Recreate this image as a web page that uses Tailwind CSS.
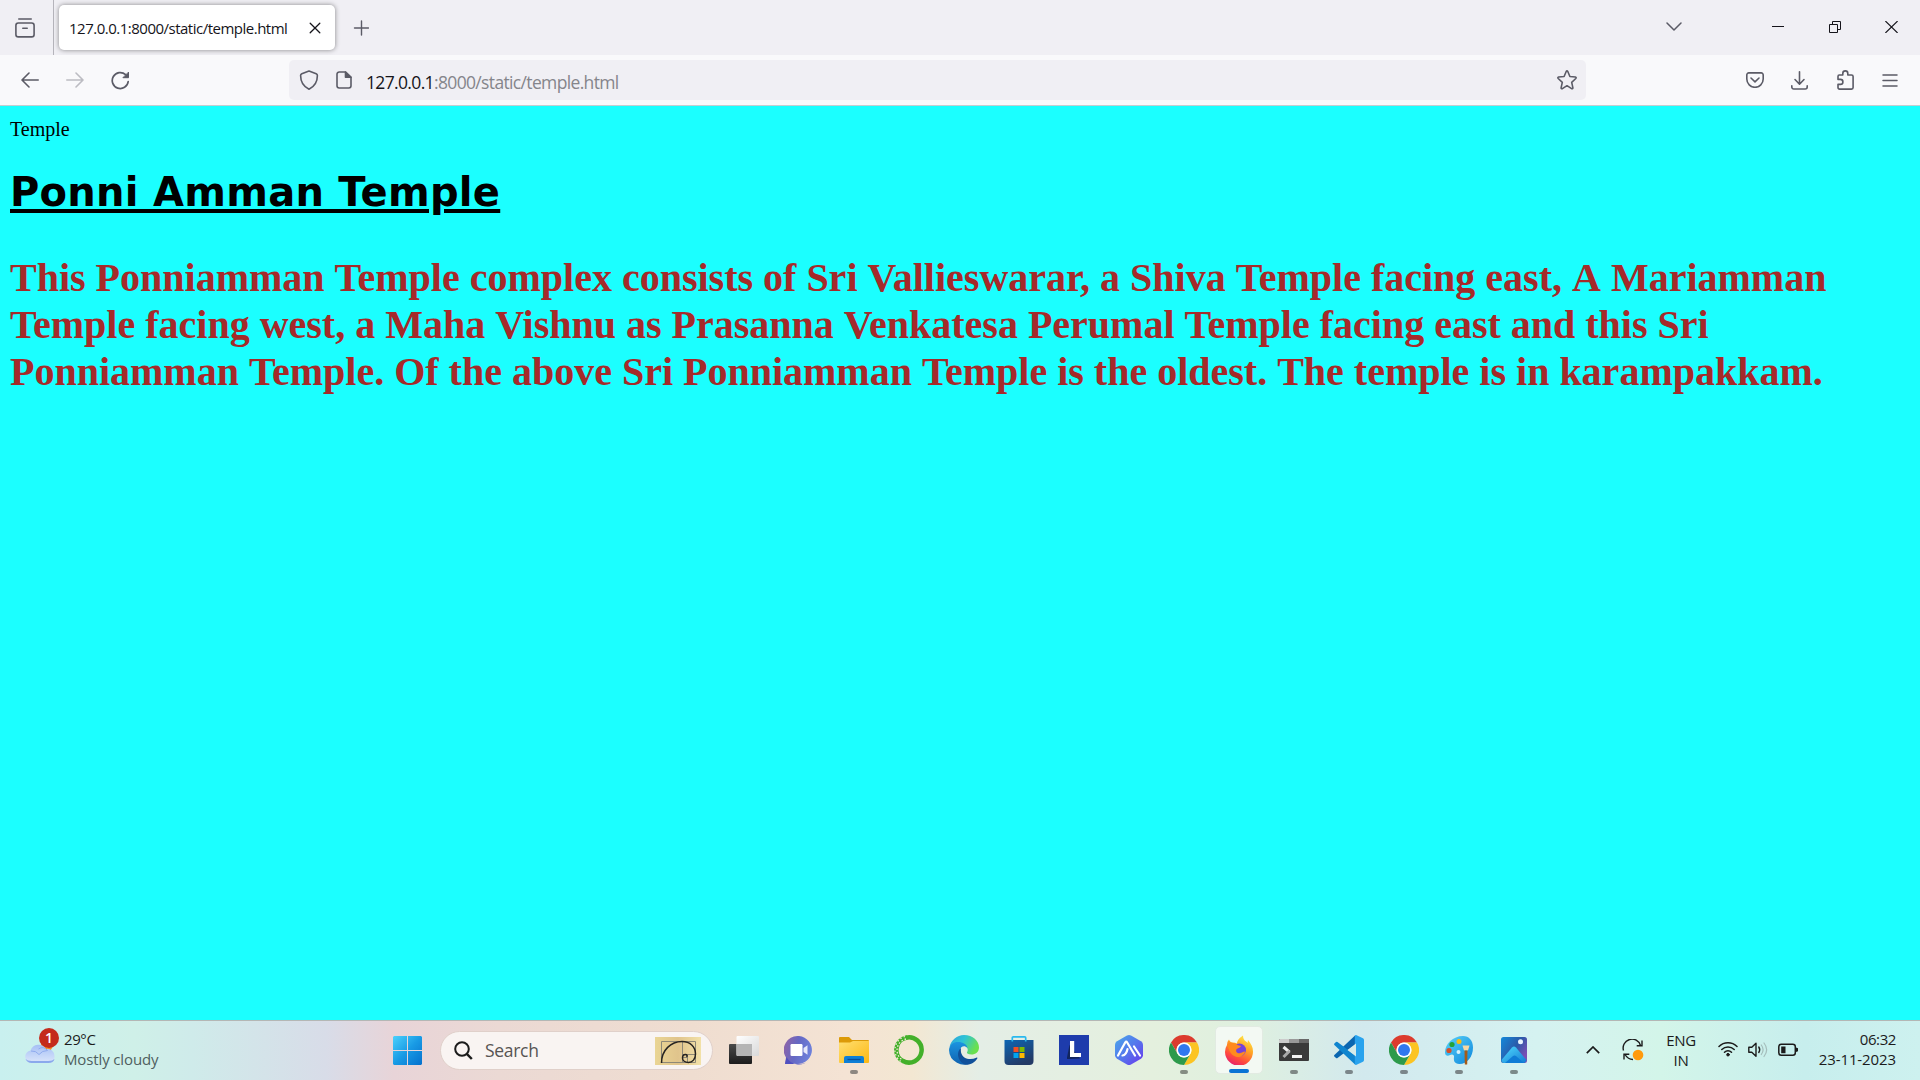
<!DOCTYPE html>
<html lang="en">
<head>
<meta charset="utf-8">
<title>Temple</title>
<script src="https://cdn.jsdelivr.net/npm/@tailwindcss/browser@4"></script>
</head>
<body class="flex h-screen w-screen flex-col overflow-hidden font-['Open_Sans',sans-serif] text-[#15141a]">

<!-- Tab strip -->
<header class="flex h-[55px] shrink-0 items-start bg-[#f0eff4]">
  <div class="flex h-[55px] w-[54px] items-center justify-center border-r border-[#b5b4bb] pr-1">
    <svg class="h-5 w-5" viewBox="0 0 20 20" fill="none" stroke="#5b5b66" stroke-width="1.6" stroke-linecap="round"><path d="M3.800 1h12.400"/><rect x=".9" y="5" width="18.200" height="13.900" rx="2.400"/><path d="M7.800 10.200h4.400"/></svg>
  </div>
  <div class="mt-[5px] ml-[5px] flex h-[45px] w-[276px] items-center rounded-[5px] bg-white pl-[10px] shadow-[0_0_5px_rgba(0,0,0,0.45)]">
    <span class="w-[240px] pt-[2px] text-[15px] tracking-[-0.5px] whitespace-nowrap">127.0.0.1:8000/static/temple.html</span>
    <svg class="h-3 w-3 shrink-0" viewBox="0 0 12 12" stroke="#15141a" stroke-width="1.3" stroke-linecap="round"><path d="M1.200 1.200l9.600 9.600M10.800 1.200L1.200 10.800"/></svg>
  </div>
  <svg class="mt-5 ml-[18px] h-4 w-4" viewBox="0 0 16 16" stroke="#5b5b66" stroke-width="1.4" stroke-linecap="round"><path d="M8.500 1v14M1.500 8h14"/></svg>
  <svg class="mt-[22px] ml-auto h-[10px] w-4" viewBox="0 0 16 10" fill="none" stroke="#5b5b66" stroke-width="1.5" stroke-linecap="round" stroke-linejoin="round"><path d="M1 1l7 7 7-7"/></svg>
  <svg class="mt-5 ml-[90px] h-[14px] w-3" viewBox="0 0 12 14"><path d="M0 6h12v1H0z" fill="#15141a"/></svg>
  <svg class="mt-[21px] ml-[45px] h-3 w-3" viewBox="0 0 12 12" fill="none" stroke="#15141a"><path d="M.5 3.500h8v8h-8zM3.500 3.500v-3h8v8h-3"/></svg>
  <svg class="mt-[21px] mr-[22px] ml-11 h-3 w-[13px]" viewBox="0 0 13 12" stroke="#15141a" stroke-width="1.1"><path d="M.4 0l12.200 12M12.600 0L.4 12"/></svg>
</header>

<!-- Navigation bar -->
<nav class="flex h-[51px] shrink-0 items-center border-b border-[#c4cdd0] bg-[#f9f9fb] pl-[21px]">
  <svg class="h-4 w-[18px]" viewBox="0 0 18 16" fill="none" stroke="#5b5b66" stroke-width="1.6" stroke-linecap="round" stroke-linejoin="round"><path d="M17.200 8H1.200M8 1L1 8l7 7"/></svg>
  <svg class="ml-[27px] h-4 w-[18px]" viewBox="0 0 18 16" fill="none" stroke="#bcbcc2" stroke-width="1.6" stroke-linecap="round" stroke-linejoin="round"><path d="M.8 8h16M10 1l7 7-7 7"/></svg>
  <svg class="ml-[27px] h-[19px] w-[19px]" viewBox="0 0 19 19" fill="none" stroke="#5b5b66" stroke-width="1.7" stroke-linecap="round"><path d="M17.200 10.500A8 8 0 1 1 14.600 3.600"/><path d="M17.500 1.500v5.200h-5.200z" fill="#5b5b66" stroke-width="1" stroke-linejoin="round"/></svg>
  <div class="ml-[159px] flex h-10 w-[1297px] items-center rounded-[5px] bg-[#f0eff4] pr-[9px] pl-[10px]">
    <svg class="h-5 w-5" viewBox="0 0 20 20" fill="none" stroke="#5b5b66" stroke-width="1.6" stroke-linejoin="round"><path d="M10 1l7.200 2.700q1.200.5 1.200 1.800c0 6-2.400 10.800-8.400 13.700C4 16.300 1.600 11.500 1.600 5.500q0-1.300 1.200-1.800z"/></svg>
    <svg class="ml-[17px] h-[18px] w-4" viewBox="0 0 16 18" fill="none" stroke="#5b5b66" stroke-width="1.6" stroke-linejoin="round"><path d="M9.500 1H3.200A2.200 2.200 0 0 0 1 3.200v11.600A2.200 2.200 0 0 0 3.200 17h9.600a2.200 2.200 0 0 0 2.200-2.200V6.300z"/><path d="M9.500 1v5.300H15z" fill="#5b5b66"/></svg>
    <span class="ml-[14px] pt-[4px] text-[17.500px] tracking-[-0.65px] whitespace-nowrap text-[#85858b]"><span class="text-[#15141a]">127.0.0.1</span>:8000/static/temple.html</span>
    <svg class="ml-auto h-5 w-5" viewBox="0 0 20 20" fill="none" stroke="#5b5b66" stroke-width="1.6" stroke-linejoin="round"><path d="M9.200 1.500q.8-1.200 1.600 0l2.100 5 5.500.5q1.200.4.4 1.500l-4.100 3.800 1.200 5.500q0 1.300-1.300.9L10 15.700l-4.600 3q-1.300.4-1.300-.9l1.200-5.500-4.100-3.800q-.8-1.100.4-1.500l5.500-.5z"/></svg>
  </div>
  <svg class="ml-40 h-4 w-[18px]" viewBox="0 0 18 16" fill="none" stroke="#5b5b66" stroke-width="1.6" stroke-linecap="round" stroke-linejoin="round"><path d="M2.800.9h12.400a2 2 0 0 1 2 2v4.200a8.200 8.200 0 0 1-16.400 0V2.900a2 2 0 0 1 2-2z"/><path d="M5 6l4 3.800L13 6"/></svg>
  <svg class="ml-[27px] h-[19px] w-[17px]" viewBox="0 0 17 19" fill="none" stroke="#5b5b66" stroke-width="1.6" stroke-linecap="round" stroke-linejoin="round"><path d="M8.500.8v12M4 8.500l4.500 4.700L13 8.500M.8 14.800v1.200a2 2 0 0 0 2 2h11.400a2 2 0 0 0 2-2v-1.200"/></svg>
  <svg class="ml-[29px] h-5 w-[17px]" viewBox="0 0 17 20" fill="none" stroke="#5b5b66" stroke-width="1.6" stroke-linejoin="round"><path d="M2.200 5h3.600V3.400a2.500 2.500 0 0 1 5 0V5h3.700q1.600 0 1.600 1.600v11q0 1.500-1.600 1.500H2.600q-1.600 0-1.600-1.500v-3.200h2.400a2.500 2.500 0 0 0 0-5H1V6.500Q1 5 2.200 5z"/></svg>
  <svg class="ml-7 h-[13px] w-4" viewBox="0 0 16 13" stroke="#5b5b66" stroke-width="1.5" stroke-linecap="round"><path d="M1 1h14M1 6.500h14M1 12h14"/></svg>
</nav>

<!-- Page -->
<main class="h-[914px] shrink-0 bg-[#1bffff] px-[10px] pt-3 font-['Liberation_Serif',serif]">
  <p class="text-[20px] leading-[23px] text-black">Temple</p>
  <h1 class="mt-[27px] font-['DejaVu_Sans',sans-serif] text-[40px] leading-[49px] font-bold tracking-[0.27px] whitespace-nowrap text-black underline decoration-[4px] underline-offset-[3px]">Ponni Amman Temple</h1>
  <h1 class="mt-[37px] text-[40px] leading-[47px] font-bold whitespace-nowrap text-[#a52a2a]">This Ponniamman <span class="inline-block">Temple</span> complex consists of Sri <span class="inline-block">Vallieswarar,</span> a Shiva <span class="inline-block">Temple</span> facing east, <span class="inline-block">A</span> Mariamman<br>Temple facing west, a Maha <span class="inline-block">Vishnu</span> as Prasanna <span class="inline-block">Venkatesa</span> Perumal <span class="inline-block">Temple</span> facing east and this Sri<br>Ponniamman <span class="inline-block">Temple.</span> Of the above Sri Ponniamman <span class="inline-block">Temple</span> is the oldest. <span class="inline-block">The</span> temple is in karampakkam.</h1>
</main>

<!-- Taskbar -->
<footer class="flex h-[60px] shrink-0 items-start border-t border-[#b4b7b5] bg-[linear-gradient(90deg,#c9f0ef_0%,#cff0e8_7%,#cfebea_10%,#d8dce8_17%,#e8d4d8_20.500%,#ebd9d4_26%,#efddd0_36%,#f4e3d4_44%,#f3e7d2_47.500%,#e4eee6_51%,#e4f0de_60%,#dff0df_65%,#d2e9ee_71%,#d5f2f1_80%,#d3f5e9_86.500%,#c7eeed_94%,#cdf1ef_100%)]">
  <div class="flex w-[393px] pl-6">
    <div class="relative mt-[7px] h-9 w-[34px]">
      <svg class="h-9 w-[34px]" viewBox="0 0 34 36">
        <defs><linearGradient id="cl" x2="0" y2="1"><stop stop-color="#a5bff5"/><stop offset="1" stop-color="#dbe6fb"/></linearGradient></defs>
        <circle cx="23" cy="17" r="6" fill="#f7871e"/>
        <path d="M7 35a6.300 6.300 0 0 1-.5-12.500A8.500 8.500 0 0 1 22 21a7 7 0 0 1 8.500 7A6 6 0 0 1 25.500 35z" fill="url(#cl)"/>
        <path d="M1.500 31q2 4 6 4h17q5 0 6-4-2 2-6 2h-17q-4 0-6-2z" fill="#8ba9ec"/>
        <path d="M7 23q5-.5 8 3.500 3-4 8.500-4-4-5-9-1.500" fill="none" stroke="#8fabee" stroke-width="1"/>
      </svg>
      <span class="absolute top-0 left-[15px] flex h-5 w-5 items-center justify-center rounded-full bg-[#c42b1c] text-[14px] leading-none font-semibold text-white">1</span>
    </div>
    <div class="mt-2 ml-[6px] text-[15px] leading-5 whitespace-nowrap">
      <p class="tracking-[-0.4px] text-[#1b1b1b]">29°C</p>
      <p class="tracking-[-0.13px] text-[#4f5f60]">Mostly cloudy</p>
    </div>
  </div>

  <svg class="mt-[15px] h-[29px] w-[29px]" viewBox="0 0 29 29"><defs><linearGradient id="win" gradientUnits="userSpaceOnUse" x1="0" y1="0" x2="29" y2="29"><stop stop-color="#4cd1fc"/><stop offset=".5" stop-color="#199be5"/><stop offset="1" stop-color="#0570cd"/></linearGradient></defs><path d="M1 0h13v14H0V1zM15 0h13l1 1v13H15zM0 15h14v14H1l-1-1zM15 15h14v13l-1 1H15z" fill="url(#win)"/></svg>

  <div class="mt-[10px] ml-[18px] flex h-[39px] w-[273px] items-center rounded-full border border-[#e0d0ca] bg-[#f9f4f2] pr-[11px] pl-[13px]">
    <svg class="h-[19px] w-[19px]" viewBox="0 0 19 19" fill="none" stroke="#1b1b1b" stroke-width="2"><circle cx="8" cy="8" r="6.800"/><path d="M12.800 12.800l5 5.200" stroke-width="2.400"/></svg>
    <span class="ml-3 text-[17.500px] tracking-[-0.3px] text-[#575453]">Search</span>
    <svg class="ml-auto h-7 w-[46px]" viewBox="0 0 46 28"><defs><linearGradient id="gd" x2="1" y2="0"><stop stop-color="#ead594"/><stop offset=".5" stop-color="#e0c48c"/><stop offset="1" stop-color="#f2e1a8"/></linearGradient></defs><path d="M0 0h46v28H0z" fill="url(#gd)"/><path d="M6.500 4.500h34v21h-34zM27.500 4.500v21M27.500 17.500h13M32.500 17.500v8M27.500 20.500h5" fill="none" stroke="#8e8876"/><path d="M6.500 26C6.500 13 16 4.500 27 4.500c8 0 13.500 5 13.500 12.500 0 5-3 8.500-7 8.500-3.500 0-6-2-6-4.500s1.500-3.500 3-3.500 2.200 1.500 1 2.500" fill="none" stroke="#262320" stroke-width="1.500"/></svg>
  </div>

  <div class="ml-[3px] flex">
    <!-- Task view -->
    <div class="flex w-[55px] justify-center pt-[14px]"><svg class="h-[30px] w-[30px]" viewBox="0 0 30 30"><defs><linearGradient id="tv" x2="0" y2="1"><stop stop-color="#4a4a4a"/><stop offset="1" stop-color="#1c1c1c"/></linearGradient><linearGradient id="tw" x2="1" y2="1"><stop stop-color="#fff"/><stop offset="1" stop-color="#d9d9d9"/></linearGradient></defs><rect y="9" width="23" height="20" rx="1" fill="url(#tv)"/><rect x="7.500" y="1" width="22.500" height="20" rx="1" fill="url(#tw)"/><path d="M7.500 9H23v12H8.500l-1-1z" fill="#b5b5b5"/></svg></div>
    <!-- Chat -->
    <div class="flex w-[55px] justify-center pt-[14px]"><svg class="h-[30px] w-[30px]" viewBox="0 0 30 30"><defs><linearGradient id="ch" x1="0" y1=".3" x2="1" y2=".6"><stop stop-color="#8e64a8"/><stop offset=".45" stop-color="#6568c4"/><stop offset="1" stop-color="#6e82dc"/></linearGradient></defs><path d="M15 1a14 14 0 1 1-5 27.400L1 29l1-6.500A14 14 0 0 1 15 1z" fill="url(#ch)"/><path d="M2.500 22A14 14 0 0 0 26 24q-4 5-11 5H1z" fill="#5050c0"/><rect x="6.500" y="9" width="12" height="12" rx="1.200" fill="#fff"/><path d="M19.500 13l4-2.800v9.600l-4-2.800z" fill="#e6e8fa"/></svg></div>
    <!-- Explorer -->
    <div class="flex w-[55px] flex-col items-center pt-[14px]"><svg class="h-[30px] w-[30px]" viewBox="0 0 30 30"><defs><linearGradient id="ex" x2="1" y2="1"><stop stop-color="#ffdf72"/><stop offset="1" stop-color="#fcb813"/></linearGradient></defs><path d="M0 3q0-1 1-1h9l3 3h16q1 0 1 1v4H0z" fill="#dc9a08"/><path d="M0 7.500h11L14 6h16v21q0 1-1 1H1q-1 0-1-1z" fill="url(#ex)"/><path d="M5 28v-5q0-2 2-2h16q2 0 2 2v5z" fill="#0f7fd6"/><path d="M8.500 24.500h13" stroke="#0a4f9b" stroke-width="1.300"/></svg><i class="mt-[5px] h-1 w-2 rounded-full bg-[#8d8781]"></i></div>
    <!-- Anaconda -->
    <div class="flex w-[55px] justify-center pt-[14px]"><svg class="h-[30px] w-[30px]" viewBox="0 0 30 30" fill="none" stroke="#43b02a"><path d="M12 2.700A12.600 12.600 0 1 1 9 26" stroke-width="4.500"/><path d="M13 2.500A12.600 12.600 0 0 0 9.500 26.300" stroke-width="4.600"/><path d="M12 4A11.500 11.500 0 0 0 8.500 25" stroke="#f3e7d8" stroke-width="1.300" stroke-dasharray="1.600 1.800"/><path d="M11 1.500A14 14 0 0 0 7 26.500" stroke="#f3e7d8" stroke-width="1.300" stroke-dasharray="1.500 2.200"/></svg></div>
    <!-- Edge -->
    <div class="flex w-[55px] justify-center pt-[14px]"><svg class="h-[30px] w-[30px]" viewBox="0 0 30 30"><defs><linearGradient id="e1" x2="1" y2=".4"><stop stop-color="#2ba0dc"/><stop offset=".5" stop-color="#2fc3d6"/><stop offset="1" stop-color="#6ae04e"/></linearGradient><linearGradient id="e2" x2="0" y2="1"><stop stop-color="#1b94e0"/><stop offset="1" stop-color="#0f62b0"/></linearGradient></defs><path d="M.5 12C2 5 8 0 15 0c9 0 15 6 15 12.500 0 4.500-3.500 7-7.500 7-3.500 0-5-1.200-4.500-2.200 1.500-2 1-5.500-3-6.800C9 8.500 3 9 .5 12z" fill="url(#e1)"/><path d="M0 15C.5 9.500 4.500 7 9 7c5 0 9 2.500 9.500 6-3-3.500-7-1.500-7.500 2-1 6 4 12 10 12l2 .2A15 15 0 0 1 0 15z" fill="url(#e2)"/><path d="M12 13c-6 5-2 14.500 4.500 16.800C22 30 26 27 28.300 23.500c.3-.8-.2-1.200-1-.8-6 3-14 1-15.300-5.500-.2-1.500-.2-3 0-4.200z" fill="#10509a"/></svg></div>
    <!-- Store -->
    <div class="flex w-[55px] justify-center pt-[14px]"><svg class="h-[30px] w-[30px]" viewBox="0 0 30 30"><defs><linearGradient id="st" x2=".5" y2="1"><stop stop-color="#0d66b4"/><stop offset="1" stop-color="#233a66"/></linearGradient></defs><path d="M.5 5h29v21a4 4 0 0 1-4 4h-21a4 4 0 0 1-4-4z" fill="url(#st)"/><path d="M8.300 6.500V2.800q0-1 1-1h11.400q1 0 1 1v3.700" fill="none" stroke="#29b9ee" stroke-width="1.700"/><path d="M9.500 12h5v5h-5z" fill="#f25022"/><path d="M15.500 12h5v5h-5z" fill="#7fba00"/><path d="M9.500 18h5v5h-5z" fill="#00a4ef"/><path d="M15.500 18h5v5h-5z" fill="#ffb900"/></svg></div>
    <!-- Lively -->
    <div class="flex w-[55px] justify-center pt-[14px]"><svg class="h-[30px] w-[30px]" viewBox="0 0 30 30"><path d="M0 0h30v30H0z" fill="#1e3cac"/><path d="M10.500 10L8 22.500V24h3l10-.5z" fill="#12255e"/><path d="M11 6h4.200v12H22v4H11z" fill="#fff"/></svg></div>
    <!-- Hexagon app -->
    <div class="flex w-[55px] justify-center pt-[14px]"><svg class="h-[30px] w-[30px]" viewBox="0 0 30 30"><defs><linearGradient id="hx" x2="1" y2="1"><stop stop-color="#49a8ea"/><stop offset=".5" stop-color="#5578ec"/><stop offset="1" stop-color="#6a35ee"/></linearGradient></defs><path d="M13 .6q2-1.100 4 0l10 5.700q2 1.200 2 3.500v10.400q0 2.300-2 3.500l-10 5.700q-2 1.100-4 0L3 23.700q-2-1.200-2-3.500V9.800q0-2.300 2-3.500z" fill="url(#hx)"/><path d="M4 20.500L11.200 7.500q1-1.600 2 0L21 20.500M8.500 20.500q3.800-.5 5-6.500M20 11.500l6 9" fill="none" stroke="#fff" stroke-width="2.200" stroke-linecap="round" stroke-linejoin="round"/></svg></div>
    <!-- Chrome -->
    <div class="flex w-[55px] flex-col items-center pt-[14px]"><svg class="h-[30px] w-[30px]" viewBox="0 0 30 30"><path d="M2 7.500A15 15 0 0 1 28 7.500H15a7.500 7.500 0 0 0-6.500 11.200z" fill="#dc3b2e"/><path d="M28 7.500A15 15 0 0 1 15 30l6.500-11.300A7.500 7.500 0 0 0 15 7.500z" fill="#fcc422"/><path d="M15 30A15 15 0 0 1 2 7.500l6.500 11.200A7.500 7.500 0 0 0 21.500 18.700z" fill="#2d9a4b"/><circle cx="15" cy="15" r="7.500" fill="#fff"/><circle cx="15" cy="15" r="6" fill="#3078ee"/></svg><i class="mt-[5px] h-1 w-2 rounded-full bg-[#858d83]"></i></div>
    <!-- Firefox -->
    <div class="flex w-[55px] justify-center pt-[5px]"><div class="flex h-12 w-12 flex-col items-center rounded-[5px] border border-[#e2ebe2] bg-[#f3f9f3] pt-2"><svg class="h-[30px] w-[30px]" viewBox="0 0 30 30"><defs><linearGradient id="ff" x1=".8" y1="0" x2=".3" y2="1"><stop stop-color="#fff04a"/><stop offset=".4" stop-color="#ffa324"/><stop offset=".75" stop-color="#ff4a3e"/><stop offset="1" stop-color="#e5206e"/></linearGradient></defs><path d="M5 4.500q1 3 3.500 3 3 .2 4.500 1 0-4 6-8 0 4 3 6 .8 0 1.500 1.500L24 5c3 3.500 5 7 5 11.500A14 14 0 0 1 1 17q0-4 2-7 0-3.500 2-5.500z" fill="url(#ff)"/><circle cx="15.500" cy="15" r="6.500" fill="#7542d8"/><path d="M3 10c3-4 8-2 11 .2 1.500.5 3 .2 3 1-1 2-3.500 1.500-4.500 3-1 2 0 4 3 4s4-2 5.500-1.500c-1 4-5 6-9 5C6 20 5 14 3 10z" fill="#ff8a1e"/></svg><i class="mt-1 h-1 w-5 rounded-full bg-[#0a74d4]"></i></div></div>
    <!-- Terminal -->
    <div class="flex w-[55px] flex-col items-center pt-[14px]"><svg class="h-[30px] w-[30px]" viewBox="0 0 30 30"><path d="M0 5q0-1 1-1h28q1 0 1 1v20q0 1-1 1H1q-1 0-1-1z" fill="#3a3a3a"/><path d="M0 8V5q0-1 1-1h9v4z" fill="#ccc"/><path d="M10 4h10v4H10z" fill="#999"/><path d="M20 4h9q1 0 1 1v3H20z" fill="#686868"/><path d="M4.500 12l6 5.200" fill="none" stroke="#eee" stroke-width="3"/><path d="M10.500 16l-6 6" stroke="#aaa" stroke-width="3"/><path d="M13 20h10v3H13z" fill="#f2f2f2"/></svg><i class="mt-[5px] h-1 w-2 rounded-full bg-[#7f8886]"></i></div>
    <!-- VS Code -->
    <div class="flex w-[55px] flex-col items-center pt-[14px]"><svg class="h-[30px] w-[30px]" viewBox="0 0 30 30"><path d="M22 9L3.500 23q-.8.500-1.500 0L.4 21.500q-.7-.8 0-1.500L21 .5z" fill="#0b66b0"/><path d="M22 21L3.500 7Q2.700 6.500 2 7L.4 8.500q-.7.800 0 1.500L21 29.500z" fill="#0f85cf"/><path d="M22 0l7 3.200q1 .5 1 1.700v20.200q0 1.200-1 1.700L22 30q-1.200 0-1.200-1V1q0-1 1.200-1z" fill="#29a3ee"/><path d="M22 8.500v13L13.500 15z" fill="#d5ebe9"/></svg><i class="mt-[5px] h-1 w-2 rounded-full bg-[#7b868a]"></i></div>
    <!-- Chrome, second profile -->
    <div class="flex w-[55px] flex-col items-center pt-[14px]"><svg class="h-[30px] w-[30px]" viewBox="0 0 30 30"><path d="M2 7.500A15 15 0 0 1 28 7.500H15a7.500 7.500 0 0 0-6.500 11.200z" fill="#dc3b2e"/><path d="M28 7.500A15 15 0 0 1 15 30l6.500-11.300A7.500 7.500 0 0 0 15 7.500z" fill="#fcc422"/><path d="M15 30A15 15 0 0 1 2 7.500l6.500 11.200A7.500 7.500 0 0 0 21.500 18.700z" fill="#2d9a4b"/><circle cx="15" cy="15" r="7.500" fill="#fff"/><circle cx="15" cy="15" r="6" fill="#3078ee"/></svg><i class="mt-[5px] h-1 w-2 rounded-full bg-[#7b868a]"></i></div>
    <!-- Paint -->
    <div class="flex w-[55px] flex-col items-center pt-[14px]"><svg class="h-[30px] w-[30px]" viewBox="0 0 30 30"><defs><linearGradient id="pt" x2="1" y2="1"><stop stop-color="#5bd3f8"/><stop offset="1" stop-color="#0d86dc"/></linearGradient></defs><path d="M19 1C9 1 1 9 1 17.500c0 3.500 3 4 5 2.500 2-1.300 4.500-.5 4 2-.5 3 0 7 5.500 7C23 29 29 22 29 12.500 29 5.500 25 1 19 1z" fill="url(#pt)"/><circle cx="8" cy="9.500" r="2.600" fill="#23a336"/><circle cx="15" cy="6.500" r="2.500" fill="#f9bd13"/><circle cx="5" cy="15.500" r="2.600" fill="#d4502b"/><circle cx="14.500" cy="17" r="2" fill="#d5f2fc"/><path d="M18.500 10.500h7l-1.500 5h-4z" fill="#f6d7a3"/><path d="M20.500 15.500h3l-.3 14h-2.400z" fill="#a55b19"/></svg><i class="mt-[5px] h-1 w-2 rounded-full bg-[#7b8688]"></i></div>
    <!-- Photos -->
    <div class="flex w-[55px] flex-col items-center pt-[14px]"><svg class="h-[30px] w-[30px]" viewBox="0 0 30 30"><defs><linearGradient id="ph" x2="1" y2=".6"><stop stop-color="#1489da"/><stop offset=".6" stop-color="#2b59a8"/><stop offset="1" stop-color="#7b4eb5"/></linearGradient><linearGradient id="pm" x2="1" y2="1"><stop stop-color="#50dcff"/><stop offset="1" stop-color="#1279d2"/></linearGradient></defs><rect x="2" y="2" width="26" height="26" rx="2.500" fill="url(#ph)"/><path d="M2.500 25L13 12.500q2-2 4 0L27.500 25q-1 3-3.500 3H5q-2 0-2.500-3z" fill="url(#pm)"/><path d="M6 28l8-7q1.500-1 3 0l8 7z" fill="#0f7cd6"/><circle cx="21.500" cy="6.700" r="2.500" fill="#e8f4ff"/></svg><i class="mt-[5px] h-1 w-2 rounded-full bg-[#7b8a8a]"></i></div>
  </div>

  <!-- System tray -->
  <div class="ml-auto flex items-start pr-6 text-[15px] leading-5 text-[#1b1b1b]">
    <svg class="mt-[25px] h-2 w-[14px]" viewBox="0 0 14 8" fill="none" stroke="#1b1b1b" stroke-width="1.700"><path d="M.8 7.200L7 1l6.200 6.200"/></svg>
    <svg class="mt-[18px] ml-[22px] h-[22px] w-[22px]" viewBox="0 0 22 22" fill="none" stroke="#1b1b1b" stroke-width="1.400"><path d="M1.500 11.500A8.700 8.700 0 0 1 18.500 6.500M20 1.500v5.300h-5.300M2 20.500v-5.300h5.300M3 15.500q3 5 8 5"/><circle cx="16" cy="16" r="5.300" fill="#ff9a0c" stroke="none"/></svg>
    <div class="mt-[9px] ml-[21px] w-[32px] text-center tracking-[-0.3px]"><p>ENG</p><p>IN</p></div>
    <svg class="mt-5 ml-[21px] h-4 w-5" viewBox="0 0 20 16" fill="none" stroke="#1b1b1b" stroke-width="1.500" stroke-linecap="round"><path d="M1 5.500a12.800 12.800 0 0 1 18 0M3.800 8.500a8.800 8.800 0 0 1 12.400 0M6.500 11.300a5 5 0 0 1 7 0"/><circle cx="10" cy="13.700" r="1.300" fill="#1b1b1b" stroke-width="1"/></svg>
    <svg class="mt-[21px] ml-[10px] h-4 w-5" viewBox="0 0 20 16" fill="none" stroke="#1b1b1b" stroke-width="1.400" stroke-linejoin="round" stroke-linecap="round"><path d="M.8 5.300h3L8 1.200v13L3.800 10.300h-3zM10.800 5q1.800 2.700 0 5.500"/><path d="M13.300 3q3.600 4.700 0 9.500M16 1q5.300 6.700 0 13.500" stroke="#a5bdbb" stroke-width="1.200"/></svg>
    <svg class="mt-[22px] ml-[10px] h-[14px] w-[21px]" viewBox="0 0 21 14"><rect x=".8" y="1.300" width="16.500" height="11" rx="2.500" fill="none" stroke="#1b1b1b" stroke-width="1.500"/><path d="M3.200 3.500H7.500v6.700H3.200zM18 4.500l2 .8v3l-2 .8z" fill="#1b1b1b"/></svg>
    <div class="mt-2 ml-[18px] w-[79px] text-right tracking-[-0.1px] whitespace-nowrap"><p class="tracking-[-0.4px]">06:32</p><p>23-11-2023</p></div>
  </div>
</footer>
</body>
</html>
